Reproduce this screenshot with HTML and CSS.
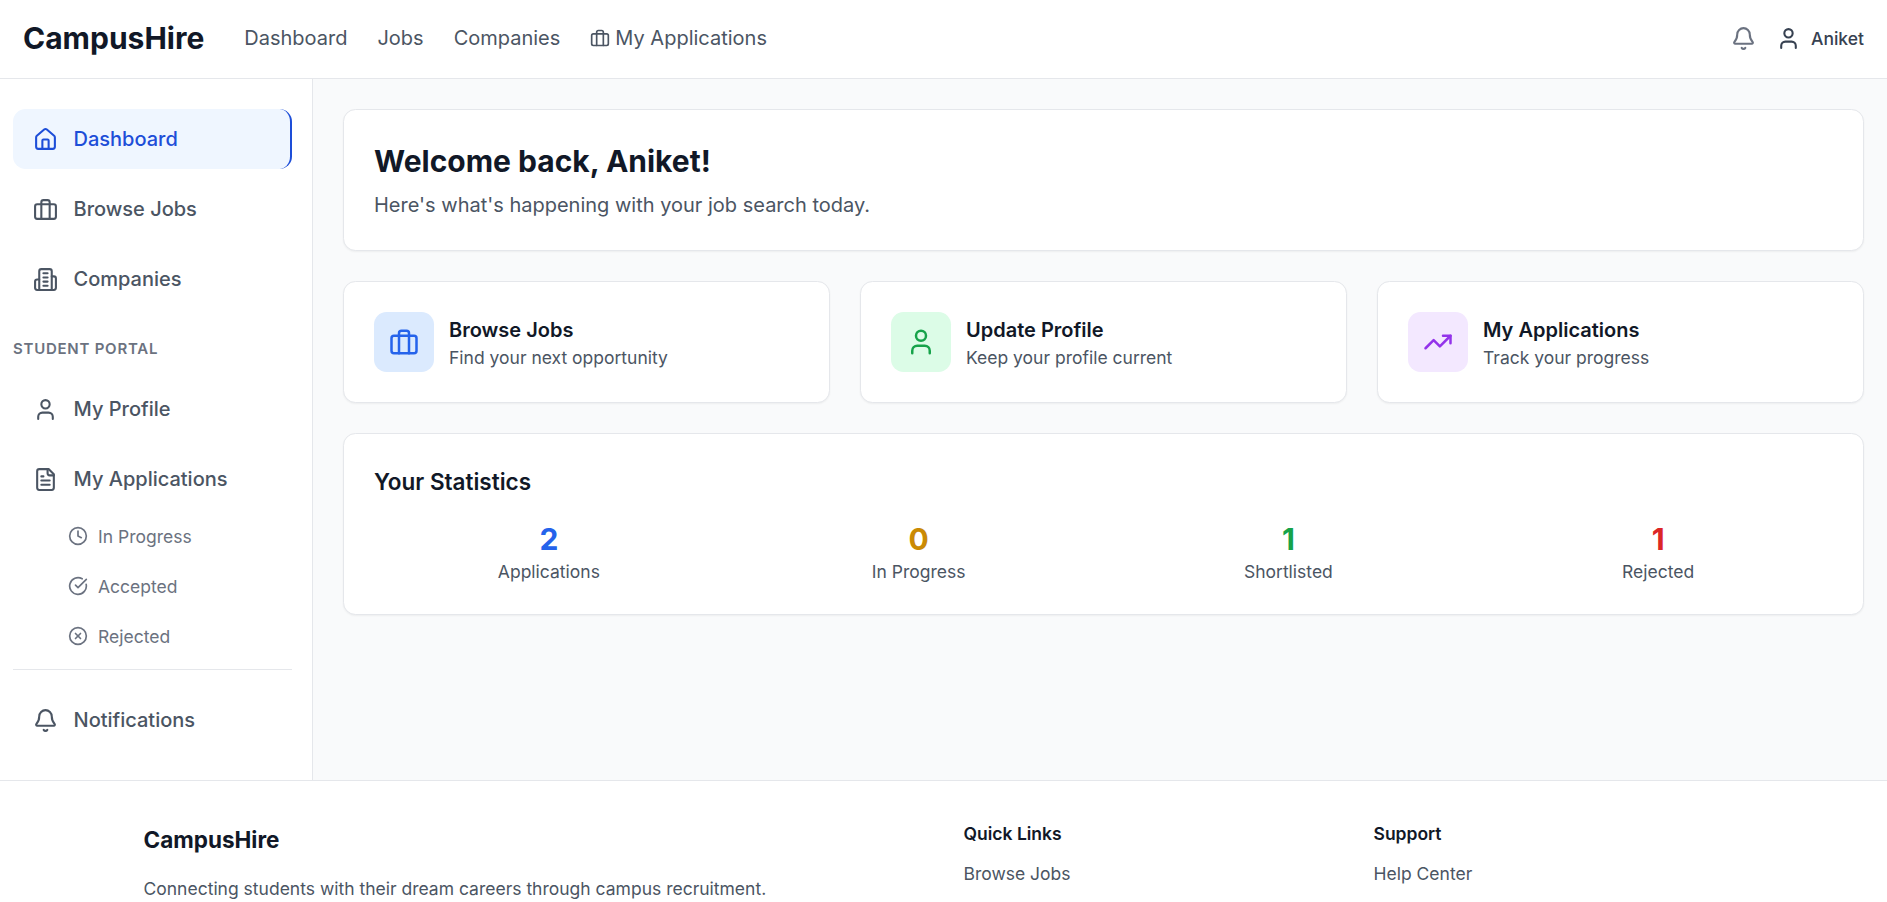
FILE: index.html
```html
<!DOCTYPE html>
<html lang="en">
<head>
    <meta charset="UTF-8">
    <meta name="viewport" content="width=device-width, initial-scale=1.0">
    <title>CampusHire</title>
    <link rel="stylesheet" href="styles.css">
</head>
<body>
    <svg class="sprite" aria-hidden="true">
        <symbol id="i-house" viewBox="0 0 24 24"><path d="M15 21v-8a1 1 0 0 0-1-1h-4a1 1 0 0 0-1 1v8"/><path d="M3 10a2 2 0 0 1 .709-1.528l7-5.999a2 2 0 0 1 2.582 0l7 5.999A2 2 0 0 1 21 10v9a2 2 0 0 1-2 2H5a2 2 0 0 1-2-2z"/></symbol>
        <symbol id="i-briefcase" viewBox="0 0 24 24"><path d="M16 21V5a2 2 0 0 0-2-2h-4a2 2 0 0 0-2 2v16"/><rect width="20" height="14" x="2" y="7" rx="2"/></symbol>
        <symbol id="i-building" viewBox="0 0 24 24"><path d="M6 22V4a2 2 0 0 1 2-2h8a2 2 0 0 1 2 2v18Z"/><path d="M6 12H4a2 2 0 0 0-2 2v6a2 2 0 0 0 2 2h2"/><path d="M18 9h2a2 2 0 0 1 2 2v9a2 2 0 0 1-2 2h-2"/><path d="M10 6h4"/><path d="M10 10h4"/><path d="M10 14h4"/><path d="M10 18h4"/></symbol>
        <symbol id="i-user" viewBox="0 0 24 24"><path d="M19 21v-2a4 4 0 0 0-4-4H9a4 4 0 0 0-4 4v2"/><circle cx="12" cy="7" r="4"/></symbol>
        <symbol id="i-file" viewBox="0 0 24 24"><path d="M15 2H6a2 2 0 0 0-2 2v16a2 2 0 0 0 2 2h12a2 2 0 0 0 2-2V7Z"/><path d="M14 2v4a2 2 0 0 0 2 2h4"/><path d="M10 9H8"/><path d="M16 13H8"/><path d="M16 17H8"/></symbol>
        <symbol id="i-clock" viewBox="0 0 24 24"><circle cx="12" cy="12" r="10"/><polyline points="12 6 12 12 16 14"/></symbol>
        <symbol id="i-check" viewBox="0 0 24 24"><path d="M21.801 10A10 10 0 1 1 17 3.335"/><path d="m9 11 3 3L22 4"/></symbol>
        <symbol id="i-x" viewBox="0 0 24 24"><circle cx="12" cy="12" r="10"/><path d="m15 9-6 6"/><path d="m9 9 6 6"/></symbol>
        <symbol id="i-bell" viewBox="0 0 24 24"><path d="M10.268 21a2 2 0 0 0 3.464 0"/><path d="M3.262 15.326A1 1 0 0 0 4 17h16a1 1 0 0 0 .74-1.673C19.41 13.956 18 12.499 18 8A6 6 0 0 0 6 8c0 4.499-1.411 5.956-2.738 7.326"/></symbol>
        <symbol id="i-trend" viewBox="0 0 24 24"><polyline points="22 7 13.5 15.5 8.5 10.5 2 17"/><polyline points="16 7 22 7 22 13"/></symbol>
    </svg>

    <header class="topbar">
        <a class="logo" href="#">CampusHire</a>
        <nav class="topnav">
            <a href="#">Dashboard</a>
            <a href="#">Jobs</a>
            <a href="#">Companies</a>
            <a class="topnav-apps" href="#"><svg class="icon icon-20"><use href="#i-briefcase"/></svg>My Applications</a>
        </nav>
        <div class="topbar-right">
            <svg class="icon icon-25 bell"><use href="#i-bell"/></svg>
            <div class="user">
                <svg class="icon icon-25"><use href="#i-user"/></svg>
                <span>Aniket</span>
            </div>
        </div>
    </header>

    <div class="layout">
        <aside class="sidebar">
            <a class="side-item active" href="#"><svg class="icon icon-25"><use href="#i-house"/></svg>Dashboard</a>
            <a class="side-item" href="#"><svg class="icon icon-25"><use href="#i-briefcase"/></svg>Browse Jobs</a>
            <a class="side-item" href="#"><svg class="icon icon-25"><use href="#i-building"/></svg>Companies</a>

            <div class="side-label">STUDENT PORTAL</div>

            <a class="side-item" href="#"><svg class="icon icon-25"><use href="#i-user"/></svg>My Profile</a>
            <a class="side-item side-item-parent" href="#"><svg class="icon icon-25"><use href="#i-file"/></svg>My Applications</a>
            <a class="side-sub" href="#"><svg class="icon icon-20"><use href="#i-clock"/></svg>In Progress</a>
            <a class="side-sub" href="#"><svg class="icon icon-20"><use href="#i-check"/></svg>Accepted</a>
            <a class="side-sub" href="#"><svg class="icon icon-20"><use href="#i-x"/></svg>Rejected</a>

            <div class="side-divider"></div>

            <a class="side-item side-item-last" href="#"><svg class="icon icon-25"><use href="#i-bell"/></svg>Notifications</a>
        </aside>

        <main class="content">
            <section class="card welcome">
                <h1>Welcome back, Aniket!</h1>
                <p>Here's what's happening with your job search today.</p>
            </section>

            <section class="actions">
                <a class="card action" href="#">
                    <span class="action-icon blue"><svg class="icon icon-30"><use href="#i-briefcase"/></svg></span>
                    <span class="action-text"><strong>Browse Jobs</strong><span>Find your next opportunity</span></span>
                </a>
                <a class="card action" href="#">
                    <span class="action-icon green"><svg class="icon icon-30"><use href="#i-user"/></svg></span>
                    <span class="action-text"><strong>Update Profile</strong><span>Keep your profile current</span></span>
                </a>
                <a class="card action" href="#">
                    <span class="action-icon purple"><svg class="icon icon-30"><use href="#i-trend"/></svg></span>
                    <span class="action-text"><strong>My Applications</strong><span>Track your progress</span></span>
                </a>
            </section>

            <section class="card stats">
                <h2>Your Statistics</h2>
                <div class="stats-grid">
                    <div class="stat"><b class="num-blue">2</b><span>Applications</span></div>
                    <div class="stat"><b class="num-yellow">0</b><span>In Progress</span></div>
                    <div class="stat"><b class="num-green">1</b><span>Shortlisted</span></div>
                    <div class="stat"><b class="num-red">1</b><span>Rejected</span></div>
                </div>
            </section>
        </main>
    </div>

    <footer class="footer">
        <div class="footer-grid">
            <div class="footer-brand">
                <h3>CampusHire</h3>
                <p>Connecting students with their dream careers through campus recruitment.</p>
            </div>
            <div class="footer-col">
                <h4>Quick Links</h4>
                <a href="#">Browse Jobs</a>
            </div>
            <div class="footer-col">
                <h4>Support</h4>
                <a href="#">Help Center</a>
            </div>
        </div>
    </footer>
</body>
</html>
```

FILE: styles.css
```css
* {
    box-sizing: border-box;
}
html, body {
    height: 100%;
}
body {
    font-family: 'Inter', 'Liberation Sans', sans-serif;
    margin: 0;
    height: 100vh;
    overflow: hidden;
    background-color: #fff;
    color: #111827;
}
a {
    color: inherit;
    text-decoration: none;
}
.sprite {
    display: none;
}
.icon {
    flex-shrink: 0;
    fill: none;
    stroke: currentColor;
    stroke-width: 2;
    stroke-linecap: round;
    stroke-linejoin: round;
}
.icon-20 { width: 20px; height: 20px; }
.icon-25 { width: 25px; height: 25px; }
.icon-30 { width: 30px; height: 30px; }

/* top bar */
.topbar {
    display: flex;
    align-items: center;
    height: 79px;
    padding: 0 23px 2px 23px;
    background: #fff;
    border-bottom: 1px solid #e5e7eb;
}
.logo {
    font-size: 30px;
    font-weight: 700;
    color: #111827;
    margin-right: 40px;
}
.topnav {
    display: flex;
    align-items: center;
    gap: 30px;
    font-size: 20px;
    color: #4b5563;
}
.topnav-apps {
    display: flex;
    align-items: center;
    gap: 5px;
}
.topbar-right {
    display: flex;
    align-items: center;
    gap: 20px;
    margin-left: auto;
}
.bell {
    color: #6b7280;
}
.user {
    display: flex;
    align-items: center;
    gap: 10px;
    font-size: 17.5px;
    font-weight: 500;
    color: #374151;
}

/* sidebar */
.layout {
    display: flex;
}
.sidebar {
    width: 313px;
    flex-shrink: 0;
    padding: 30px 20px 30px 13px;
    background: #fff;
    border-right: 1px solid #e5e7eb;
}
.side-item {
    display: flex;
    align-items: center;
    gap: 15.5px;
    height: 60px;
    padding-left: 20px;
    margin-bottom: 10px;
    border-radius: 12.5px;
    font-size: 20px;
    font-weight: 500;
    color: #4b5563;
}
.side-item.active {
    background: #eff6ff;
    color: #1d4ed8;
    border-right: 2.5px solid #1d4ed8;
}
.side-item-parent {
    margin-bottom: 7px;
}
.side-item-last {
    margin-bottom: 0;
}
.side-label {
    height: 20px;
    line-height: 20px;
    margin: 30px 0 20px;
    font-size: 15px;
    font-weight: 600;
    letter-spacing: 0.75px;
    color: #6b7280;
}
.side-sub {
    display: flex;
    align-items: center;
    gap: 10px;
    height: 40px;
    padding-left: 55px;
    margin-bottom: 10px;
    font-size: 17.5px;
    color: #6b7280;
}
.side-divider {
    height: 1px;
    margin: 13px 0 20px;
    background: #e5e7eb;
}

/* main content */
.content {
    flex: 1;
    min-width: 0;
    padding: 30px 23px 30px 30px;
    background: #f9fafb;
}
.card {
    background: #fff;
    border: 1px solid #e5e7eb;
    border-radius: 12.5px;
    box-shadow: 0 1px 2px rgba(0, 0, 0, 0.05);
}
.welcome {
    padding: 30px;
    margin-bottom: 30px;
}
.welcome h1 {
    margin: 0 0 7.5px;
    font-size: 30px;
    line-height: 42.5px;
    font-weight: 700;
    color: #111827;
}
.welcome p {
    margin: 0;
    font-size: 20px;
    line-height: 30px;
    color: #4b5563;
}
.actions {
    display: grid;
    grid-template-columns: repeat(3, 1fr);
    gap: 30px;
    margin-bottom: 30px;
}
.action {
    display: flex;
    align-items: center;
    gap: 15px;
    padding: 30px;
}
.action-icon {
    display: flex;
    align-items: center;
    justify-content: center;
    width: 60px;
    height: 60px;
    border-radius: 12.5px;
}
.blue { background: #dbeafe; color: #2563eb; }
.green { background: #dcfce7; color: #16a34a; }
.purple { background: #f3e8ff; color: #9333ea; }
.action-text {
    display: flex;
    flex-direction: column;
}
.action-text strong {
    font-size: 20px;
    line-height: 30px;
    font-weight: 600;
    color: #111827;
}
.action-text span {
    font-size: 17.5px;
    line-height: 25px;
    color: #4b5563;
}
.stats {
    padding: 30px;
}
.stats h2 {
    margin: 0 0 20px;
    font-size: 22.5px;
    line-height: 36px;
    font-weight: 600;
    color: #111827;
}
.stats-grid {
    display: grid;
    grid-template-columns: repeat(4, 1fr);
    gap: 20px;
}
.stat {
    display: flex;
    flex-direction: column;
    align-items: center;
}
.stat b {
    font-size: 30px;
    line-height: 38px;
    font-weight: 700;
    margin-bottom: 1px;
}
.stat span {
    font-size: 17.5px;
    line-height: 25px;
    color: #4b5563;
}
.num-blue { color: #2563eb; }
.num-yellow { color: #ca8a04; }
.num-green { color: #16a34a; }
.num-red { color: #dc2626; }

/* footer */
.footer {
    padding-top: 40px;
    background: #fff;
    border-top: 1px solid #e5e7eb;
}
.footer-grid {
    display: grid;
    grid-template-columns: repeat(4, 1fr);
    gap: 40px;
    max-width: 1600px;
    margin: 0 auto;
}
.footer-brand {
    grid-column: span 2;
}
.footer-brand h3 {
    margin: 0 0 18px;
    font-size: 22.5px;
    line-height: 37px;
    font-weight: 700;
    color: #111827;
}
.footer-brand p {
    margin: 0;
    font-size: 17.5px;
    line-height: 25px;
    color: #4b5563;
}
.footer-col h4 {
    margin: 0 0 15px;
    font-size: 17.5px;
    line-height: 25px;
    font-weight: 600;
    color: #111827;
}
.footer-col a {
    display: block;
    font-size: 17.5px;
    line-height: 25px;
    color: #4b5563;
}
```
